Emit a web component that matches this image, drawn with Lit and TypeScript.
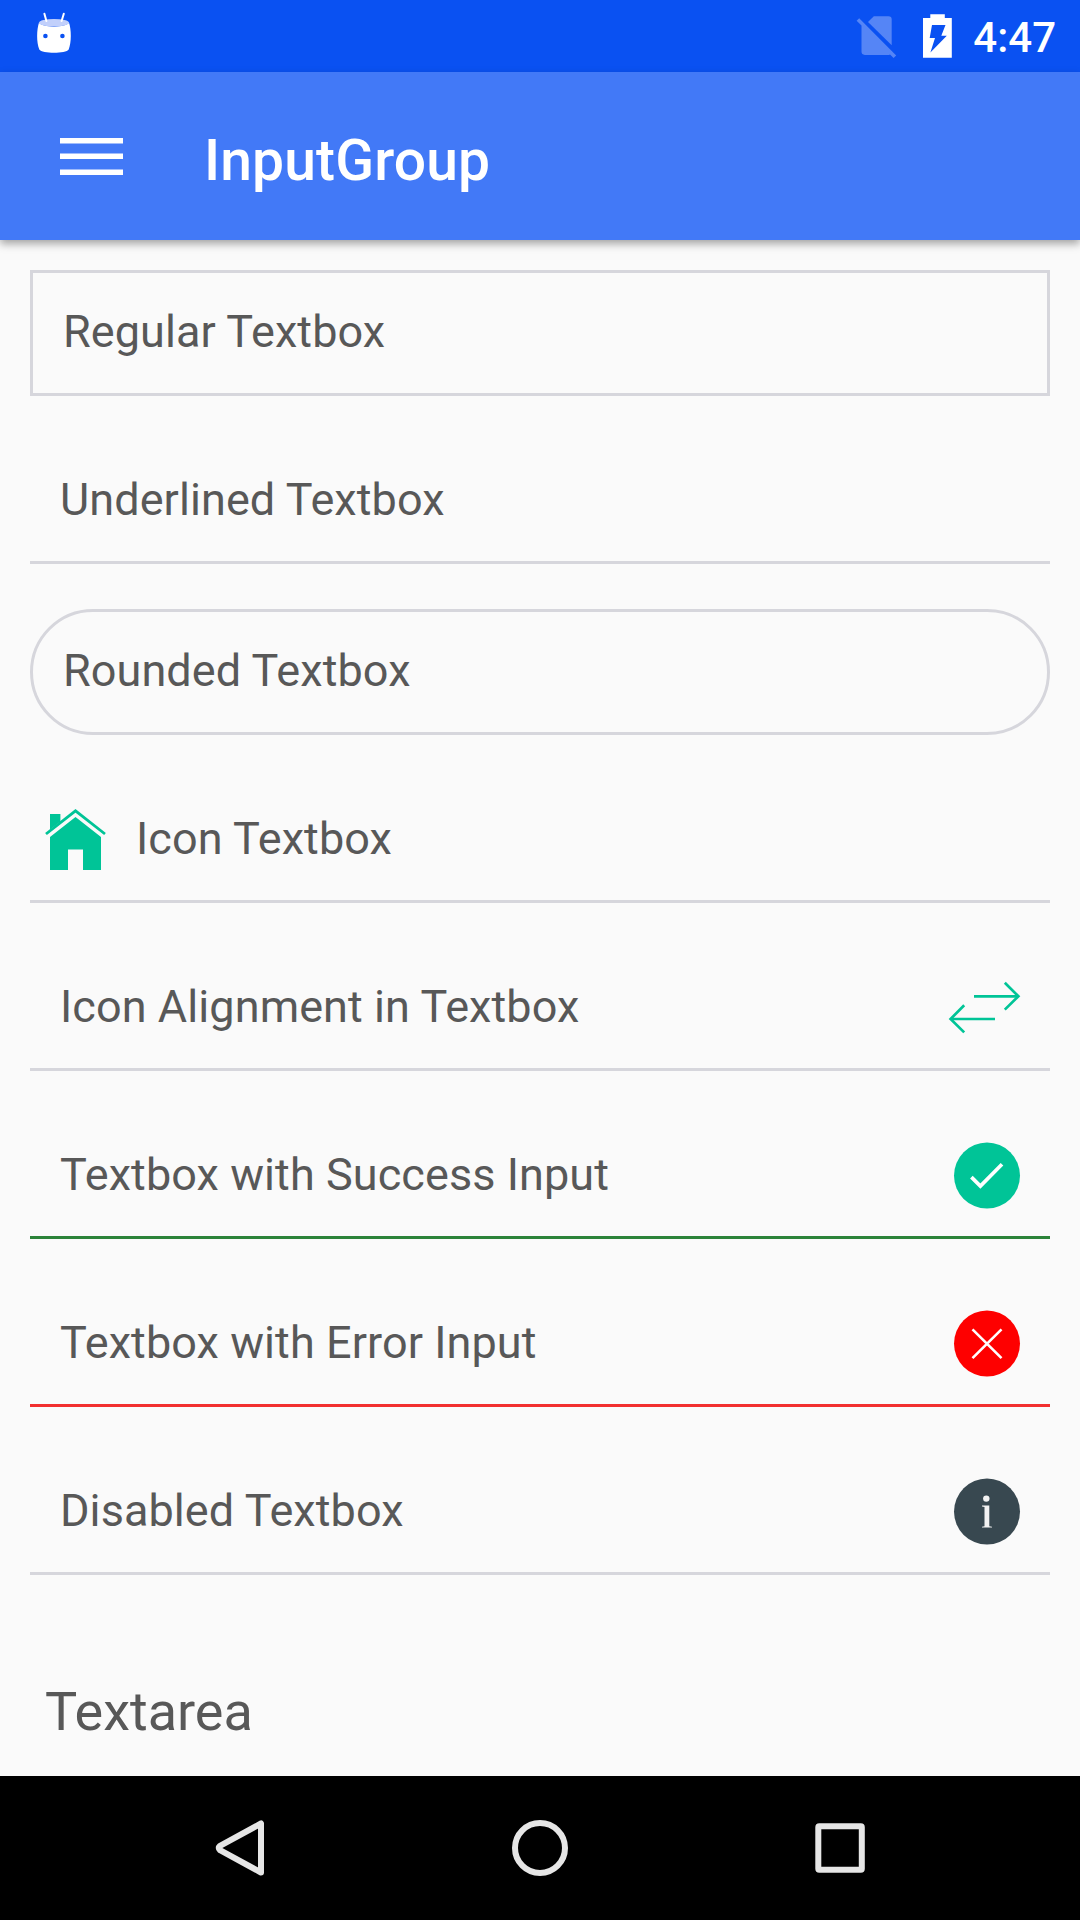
import { LitElement, html, css, svg, nothing, type TemplateResult } from "lit";
import { customElement, property } from "lit/decorators.js";

type IconName = "home" | "swap" | "success" | "error" | "info";

/** Icon artwork, each with the view box it is drawn in. */
const ICONS: Record<IconName, { box: string; w: number; h: number; art: TemplateResult | unknown }> = {
  home: {
    box: "45 809 61 62", w: 61, h: 62,
    art: svg`
      <path fill="#00c497" d="M50 814H60.4V821.4L50 829.6ZM75.5 817L101 837V870H83V849.5H68V870H50V837Z"/>
      <path fill="none" stroke="#00c497" stroke-width="2.8" d="M46 834L75.5 810.8L105 834"/>`,
  },
  swap: {
    box: "948 981 72 54", w: 72, h: 54,
    art: svg`
      <g fill="none" stroke="#00c497" stroke-width="2.7">
        <path d="M974 996.3H1018"/><path d="M1004.8 982.7L1018.4 996.3L1004.8 1009.6"/>
        <path d="M995 1019H951"/><path d="M964.2 1005.3L950.6 1019L964.2 1032.4"/>
      </g>`,
  },
  success: {
    box: "0 0.4 66 66", w: 66, h: 66,
    art: svg`<circle cx="33" cy="33" r="33" fill="#00c497"/>
      <path fill="none" stroke="#fff" stroke-width="3.7" d="M17.400 34.500L26.400 43.500L48 21.600"/>`,
  },
  error: {
    box: "0 0.4 66 66", w: 66, h: 66,
    art: svg`<circle cx="33" cy="33" r="33" fill="#fe0000"/>
      <path fill="none" stroke="#fff" stroke-width="2.6" d="M18.500 18.800L47.500 47.500M47.500 18.800L18.500 47.500"/>`,
  },
  info: {
    box: "0 0.4 66 66", w: 66, h: 66,
    art: svg`<circle cx="33" cy="33" r="33" fill="#384850"/>
      <circle cx="32.3" cy="20" r="3.2" fill="#f2f2f2"/>
      <path fill="#f2f2f2" d="M28 27H35.300V47.600L38 48.200V49H28V48.200L30.500 47.600V28.400L28 27.900Z"/>`,
  },
};

@customElement("input-field")
class InputField extends LitElement {
  @property() label = "";
  @property() variant: "regular" | "underline" | "rounded" = "underline";
  @property() state: "normal" | "success" | "error" = "normal";
  @property() leading?: IconName;
  @property() trailing?: IconName;

  static styles = css`
    :host { display: block; }
    .field {
      box-sizing: border-box;
      display: flex;
      align-items: center;
      height: 123px;
      padding: 0 30px;
      border: 0 solid #d6d6dc;
      border-bottom-width: 3px;
    }
    .regular, .rounded { height: 126px; border-width: 3px; }
    .rounded { border-radius: 63px; }
    .success { border-color: #2b8339; }
    .error { border-color: #f22f2f; }
    .leading { padding-left: 15px; gap: 30px; }
    .label {
      flex: 1;
      font: 400 45px/54px Roboto, sans-serif;
      letter-spacing: 0.08px;
      color: #585858;
      padding-bottom: 2px;
      white-space: nowrap;
    }
    svg { display: block; flex: none; overflow: visible; }
  `;

  private icon(name?: IconName) {
    if (!name) return nothing;
    const i = ICONS[name];
    return html`<svg width=${i.w} height=${i.h} viewBox=${i.box}>${i.art}</svg>`;
  }

  render() {
    return html`<div class="field ${this.variant} ${this.state} ${this.leading ? "leading" : ""}">
      ${this.icon(this.leading)}<span class="label">${this.label}</span>${this.icon(this.trailing)}
    </div>`;
  }
}

@customElement("app-root")
class AppRoot extends LitElement {
  static styles = css`
    :host {
      display: flex;
      flex-direction: column;
      width: 1080px;
      height: 1920px;
      overflow: hidden;
      background: #fafafa;
      font-family: Roboto, sans-serif;
    }
    svg { display: block; flex: none; }
    .status {
      display: flex;
      flex: none;
      height: 72px;
      box-sizing: border-box;
      padding: 0 24px 0 36px;
      background: #0a51f2;
      color: #fff;
    }
    .spacer { flex: 1; }
    .clock { font-size: 42px; font-weight: 500; line-height: 76px; margin-left: 20px; }
    .bar {
      display: flex;
      flex: none;
      align-items: center;
      height: 168px;
      box-sizing: border-box;
      padding-left: 60px;
      gap: 81px;
      background: #4279f7;
      box-shadow: 0 4px 8px rgba(0, 0, 0, 0.34);
    }
    .burger { padding-top: 2px; }
    .title {
      font-size: 57px;
      font-weight: 500;
      line-height: 68px;
      letter-spacing: 0.12px;
      color: #fff;
      padding-top: 10px;
    }
    .content {
      flex: 1;
      min-height: 0;
      display: flex;
      flex-direction: column;
      gap: 45px;
      padding: 30px 30px 0;
    }
    .heading { font-size: 54px; line-height: 64px; color: #585858; padding: 60px 15px 0; }
    .nav {
      display: flex;
      flex: none;
      justify-content: space-between;
      align-items: center;
      height: 144px;
      box-sizing: border-box;
      padding: 0 210px;
      background: #000;
    }
  `;

  render() {
    return html`
      <div class="status">
        <svg width="36" height="72" viewBox="36 0 36 72">
          <path fill="#fff" d="M39 22.5C36.6 30 36.4 42 39.3 49.5C42 53.8 66 53.8 68.7 49.5C71.6 42 71.4 30 69 22.5C66 28 42 28 39 22.5Z"/>
          <ellipse cx="54" cy="22.8" rx="15" ry="3.8" fill="#c2d0fb"/>
          <path stroke="#fff" stroke-width="2" stroke-linecap="round" d="M44.4 13.7L46.4 21M63.8 13.7L61.6 21"/>
          <g fill="#0a51f2"><circle cx="45.4" cy="36" r="2.3"/><circle cx="62.4" cy="36" r="2.3"/></g>
        </svg>
        <span class="spacer"></span>
        <svg width="97" height="72" viewBox="856 0 97 72">
          <g fill="#5585f6">
            <path d="M868 22L873.8 16.2H888.5Q891.7 16.2 891.7 19.4V45.3Z"/>
            <path d="M859.2 18.2L896.2 55.4L893.6 58L890 54.4Q889 54.9 888 54.9H864.8Q861.5 54.9 861.5 51.6V25.6L856.6 20.7Z"/>
          </g>
          <path fill="#fff" fill-rule="evenodd" d="M930.3 14.2H944.8V18H951.8V57.8H923V18H930.3ZM932 25L929.7 38H935L930.4 52.6L946.8 35.7H941.3L945.5 25Z"/>
        </svg>
        <span class="clock">4:47</span>
      </div>
      <div class="bar">
        <svg class="burger" width="63" height="38" viewBox="60 138 63 38">
          <path fill="#fff" d="M60 138H123V143.5H60ZM60 153.5H123V159H60ZM60 169.4H123V175H60Z"/>
        </svg>
        <span class="title">InputGroup</span>
      </div>
      <div class="content">
        <input-field label="Regular Textbox" variant="regular"></input-field>
        <input-field label="Underlined Textbox"></input-field>
        <input-field label="Rounded Textbox" variant="rounded"></input-field>
        <input-field label="Icon Textbox" leading="home"></input-field>
        <input-field label="Icon Alignment in Textbox" trailing="swap"></input-field>
        <input-field label="Textbox with Success Input" state="success" trailing="success"></input-field>
        <input-field label="Textbox with Error Input" state="error" trailing="error"></input-field>
        <input-field label="Disabled Textbox" trailing="info"></input-field>
        <div class="heading">Textarea</div>
      </div>
      <div class="nav">
        <svg width="60" height="60" viewBox="210 1818 60 60">
          <path fill="none" stroke="#e6e6e6" stroke-width="6" stroke-linejoin="round" d="M261 1823.5V1872.5L220 1850.2Q217.500 1848 220 1845.800Z"/>
        </svg>
        <svg width="60" height="60" viewBox="510 1818 60 60">
          <circle cx="540" cy="1848" r="25" fill="none" stroke="#e6e6e6" stroke-width="6"/>
        </svg>
        <svg width="60" height="60" viewBox="810 1818 60 60">
          <rect x="818.3" y="1826.200" width="43.500" height="43.500" rx="1" fill="none" stroke="#e6e6e6" stroke-width="6" stroke-linejoin="round"/>
        </svg>
      </div>
    `;
  }
}
